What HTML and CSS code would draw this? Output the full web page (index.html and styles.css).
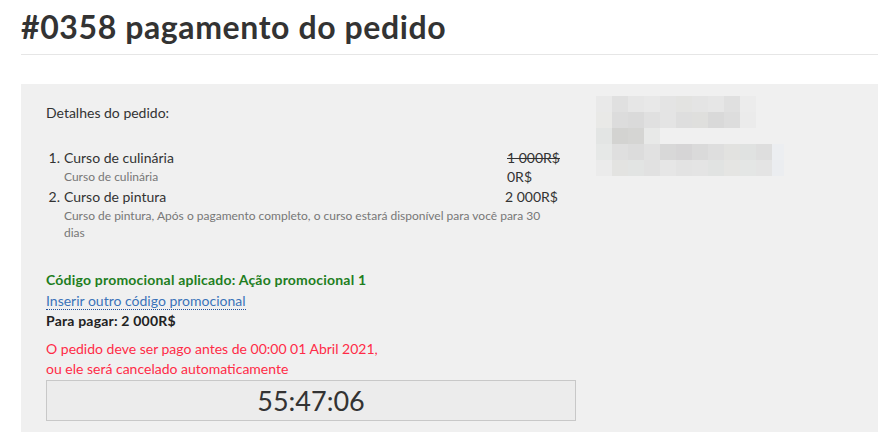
FILE: index.html
```html
<!DOCTYPE html>
<html lang="pt">
<head>
<meta charset="utf-8">
<title>#0358 pagamento do pedido</title>
<link rel="stylesheet" href="styles.css">
</head>
<body>
<div class="page">
  <h1 class="title">#0358 pagamento do pedido</h1>
  <div class="panel">
    <div class="main">
      <div class="label">Detalhes do pedido:</div>
      <div class="items">
        <div class="num">1.</div>
        <div class="name">Curso de culinária</div>
        <div class="price"><s>1 000R$</s></div>
        <div class="sub">Curso de culinária</div>
        <div class="price-new">0R$</div>
        <div class="num gap">2.</div>
        <div class="name gap">Curso de pintura</div>
        <div class="price gap">2 000R$</div>
        <div class="sub wide">Curso de pintura, Após o pagamento completo, o curso estará disponível para você para 30 dias</div>
      </div>
      <div class="promo">Código promocional aplicado: Ação promocional 1</div>
      <div><a class="link" href="#">Inserir outro código promocional</a></div>
      <div class="topay">Para pagar: 2 000R$</div>
      <div class="warn">O pedido deve ser pago antes de 00:00 01 Abril 2021,<br>ou ele será cancelado automaticamente</div>
      <div class="timer">55:47:06</div>
    </div>
    <div class="side">
      <div class="blur">
        <span style="background:#e9e9e9"></span><span style="background:#e0e0e0"></span><span style="background:#e6e6e6"></span><span style="background:#e8e8e8"></span><span style="background:#e4e4e4"></span><span style="background:#e3e3e1"></span><span style="background:#e4e4e4"></span><span style="background:#e6e6e6"></span><span style="background:#e0e0e0"></span><span style="background:#ececec"></span><span></span><span></span>
        <span style="background:#e9e9e7"></span><span style="background:#dcdcdc"></span><span style="background:#dadada"></span><span style="background:#e0e0e0"></span><span style="background:#e4e4e4"></span><span style="background:#dedede"></span><span style="background:#dfdfdd"></span><span style="background:#d9d9d9"></span><span style="background:#dddddd"></span><span style="background:#ebebeb"></span><span></span><span></span>
        <span style="background:#e3e5e4"></span><span style="background:#d3d3d1"></span><span style="background:#d5d5d3"></span><span style="background:#e8e9e8"></span><span></span><span></span><span></span><span></span><span></span><span></span><span></span><span></span>
        <span style="background:#e6e8e7"></span><span style="background:#dfdfdf"></span><span style="background:#dcdcdc"></span><span style="background:#e1e1e1"></span><span style="background:#d8d8d8"></span><span style="background:#d6d5d6"></span><span style="background:#dadada"></span><span style="background:#dedede"></span><span style="background:#e2e2e0"></span><span style="background:#e0e2e1"></span><span style="background:#dedede"></span><span style="background:#eceef1"></span>
        <span style="background:#ebebeb"></span><span style="background:#e3e3e1"></span><span style="background:#e2e4e3"></span><span style="background:#e1e1e1"></span><span style="background:#e6e6e6"></span><span style="background:#e3e3e3"></span><span style="background:#e4e4e4"></span><span style="background:#e1e3e2"></span><span style="background:#e5e5e3"></span><span style="background:#e4e6e5"></span><span style="background:#e4e4e4"></span><span style="background:#ebedf0"></span>
      </div>
    </div>
  </div>
</div>
</body>
</html>
```
FILE: styles.css
```css
* { box-sizing: border-box; }
html, body { margin: 0; padding: 0; background: #fff; }
body {
  font-family: Lato, "Noto Sans", "Liberation Sans", sans-serif;
  color: #333;
  overflow: hidden;
}
.page { padding-left: 21px; }
.title {
  margin: 0;
  padding-top: 8px;
  height: 55px;
  font-size: 32px;
  line-height: 38px;
  font-weight: 700;
  letter-spacing: 0.6px;
  color: #333;
  border-bottom: 1px solid #e6e6e6;
}
.panel {
  margin-top: 29px;
  background: #f0f0f0;
  display: flex;
  padding: 19px 0 11px 25px;
}
.main { width: 530px; }
.label { font-size: 14px; line-height: 20px; }
.items {
  margin-top: 25px;
  padding-right: 18px;
  display: grid;
  grid-template-columns: 18px 1fr auto;
  font-size: 14px;
}
.num { text-align: right; padding-right: 4px; line-height: 20px; }
.name { line-height: 20px; }
.price { line-height: 20px; text-align: right; white-space: nowrap; }
.price s { display: inline-block; width: 51px; text-align: left; }
.price-new { width: 51px; justify-self: end; font-size: 14px; line-height: 17px; white-space: nowrap; }
.sub { grid-column: 2; font-size: 12px; line-height: 17px; color: #777; }
.sub.wide { grid-column: 2 / 4; }
.gap { margin-top: 2px; }
.promo {
  margin-top: 29px;
  font-size: 14px;
  line-height: 20px;
  font-weight: 700;
  letter-spacing: 0.2px;
  color: #1e7e1e;
}
.link {
  font-size: 14px;
  line-height: 16px;
  color: #3b73b9;
  text-decoration: none;
  border-bottom: 1px dotted #1f4f9a;
  display: inline-block;
}
.topay {
  margin-top: 1px;
  font-size: 14px;
  line-height: 20px;
  font-weight: 700;
  letter-spacing: 0.2px;
  color: #222;
}
.warn {
  margin-top: 8px;
  font-size: 14px;
  line-height: 20px;
  color: #ff2b47;
}
.timer {
  margin-top: 1px;
  height: 41px;
  border: 1px solid #c8c8c8;
  background: #ececec;
  text-align: center;
  font-size: 27px;
  font-weight: 400;
  line-height: 39px;
  color: #333;
}
.side { padding-left: 20px; }
.blur {
  margin-top: -7px;
  display: grid;
  grid-template-columns: repeat(11, 16px) 12px;
  grid-auto-rows: 16px;
}
```
